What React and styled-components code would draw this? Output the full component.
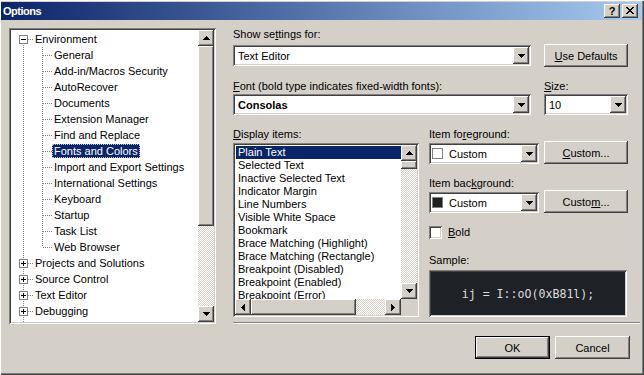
import React from 'react';
import styled, { createGlobalStyle, css } from 'styled-components';

const FACE = '#d4d0c8';
const SHADOW = '#808080';
const DARK = '#404040';
const NAVY = '#0a246a';
const DOT = '#808080';

const GlobalStyle = createGlobalStyle`
  html, body { margin: 0; padding: 0; background: ${FACE}; }
  body {
    width: 644px; height: 375px; overflow: hidden;
    font-family: "Liberation Sans", Arial, sans-serif;
    font-size: 11px; color: #000;
  }
  * { box-sizing: border-box; }
  u { text-underline-offset: 1px; }
`;

const raised = css`
  background-color: ${FACE};
  box-shadow: inset -1px -1px ${DARK}, inset 1px 1px #fff,
    inset -2px -2px ${SHADOW}, inset 2px 2px ${FACE};
`;

const sunken = css`
  box-shadow: inset 1px 1px ${SHADOW}, inset -1px -1px #fff,
    inset 2px 2px ${DARK}, inset -2px -2px ${FACE};
`;

const checker = css`
  background: repeating-conic-gradient(${FACE} 0 25%, #fff 0 50%) 0 0 / 2px 2px;
`;

/* ---------- window ---------- */

const Window = styled.div`
  width: 644px;
  height: 375px;
  display: flex;
  flex-direction: column;
  padding: 2px 2px 2px 1px;
  background: ${FACE};
  box-shadow: inset 1px 1px #fff, inset -1px -1px ${DARK}, inset -2px -2px ${SHADOW};
`;

const TitleBar = styled.div`
  height: 18px;
  display: flex;
  align-items: center;
  padding: 0 4px 0 2px;
  background: linear-gradient(to right, ${NAVY}, #a6caf0);
`;

const Title = styled.span`
  flex: 1;
  color: #fff;
  font-weight: bold;
  font-size: 11px;
  letter-spacing: -0.5px;
`;

const CaptionButtons = styled.div`
  display: flex;
  gap: 2px;
`;

const CaptionButton = styled.div`
  ${raised};
  width: 16px;
  height: 14px;
  display: flex;
  align-items: center;
  justify-content: center;
  font-weight: bold;
  font-size: 11px;
  line-height: 14px;
  padding-bottom: 1px;
`;

const Main = styled.div`
  display: flex;
  align-items: flex-start;
  margin-top: 8px;
  padding-left: 8px;
`;

/* ---------- tree ---------- */

const Tree = styled.div`
  ${sunken};
  background: #fff;
  width: 207px;
  height: 296px;
  padding: 2px;
  display: flex;
`;

const TreeList = styled.div`
  flex: 1;
  overflow: hidden;
  padding-top: 1px;
`;

const TreeRow = styled.div`
  height: 16px;
  display: flex;
  white-space: nowrap;
`;

const V = `repeating-linear-gradient(to bottom, ${DOT} 0 1px, transparent 1px 2px)`;
const H = `repeating-linear-gradient(to right, ${DOT} 0 1px, transparent 1px 2px)`;

function connectorLayers({ $up, $down, $branch, $w }) {
  const x = 12;
  const layers = [];
  if ($up) layers.push([V, `${x}px 0`, '1px 8px']);
  if ($down) layers.push([V, `${x}px 8px`, '1px 8px']);
  if ($branch) layers.push([H, `${x + 1}px 8px`, `${$w - x - 1}px 1px`]);
  if (!layers.length) return 'background: none;';
  return `
    background-image: ${layers.map((l) => l[0]).join(', ')};
    background-position: ${layers.map((l) => l[1]).join(', ')};
    background-size: ${layers.map((l) => l[2]).join(', ')};
    background-repeat: no-repeat;
  `;
}

const Connector = styled.span`
  flex: none;
  width: ${(p) => p.$w}px;
  height: 16px;
  display: flex;
  align-items: flex-start;
  ${(p) => connectorLayers(p)};
`;

const Expander = styled.span`
  width: 9px;
  height: 9px;
  margin: 4px 0 0 8px;
  border: 1px solid ${SHADOW};
  background-color: #fff;
  background-image: linear-gradient(#000, #000)
    ${(p) => (p.$open ? '' : ', linear-gradient(#000, #000)')};
  background-position: center;
  background-size: 5px 1px ${(p) => (p.$open ? '' : ', 1px 5px')};
  background-repeat: no-repeat;
`;

const TreeLabel = styled.span`
  align-self: center;
  height: 14px;
  line-height: 14px;
  padding: 0 2px;
  ${(p) =>
    p.$selected &&
    css`
      background: ${NAVY};
      color: #fff;
      outline: 1px dotted #c8c8c8;
      outline-offset: -1px;
    `}
`;

const ScrollV = styled.div`
  width: 16px;
  flex: none;
  display: flex;
  flex-direction: column;
`;

const ScrollH = styled.div`
  height: 16px;
  display: flex;
`;

const ArrowButton = styled.div`
  ${raised};
  width: 16px;
  height: 16px;
  flex: none;
  display: flex;
  align-items: center;
  justify-content: center;
`;

const Thumb = styled.div`
  ${raised};
  flex: none;
  ${(p) => (p.$vertical ? `height: ${p.$size}px; width: 16px;` : `width: ${p.$size}px; height: 16px;`)}
`;

const Track = styled.div`
  flex: 1;
  ${checker};
`;

const Corner = styled.div`
  background: ${FACE};
`;

const arrowPaths = {
  up: 'M3 0h1v1h1v1h1v1h1v1H0V3h1V2h1V1h1z',
  down: 'M0 0h7v1H6v1H5v1H4v1H3V3H2V2H1V1H0z',
  left: 'M3 0h1v7H3V6H2V5H1V4H0V3h1V2h1V1h1z',
  right: 'M0 0h1v1h1v1h1v1h1v1H3v1H2v1H1v1H0z',
};

function Arrow({ dir }) {
  const horiz = dir === 'left' || dir === 'right';
  return (
    <svg width={horiz ? 4 : 7} height={horiz ? 7 : 4} viewBox={horiz ? '0 0 4 7' : '0 0 7 4'} shapeRendering="crispEdges">
      <path d={arrowPaths[dir]} fill="#000" />
    </svg>
  );
}

/* ---------- right pane ---------- */

const Pane = styled.div`
  margin-left: 17px;
  width: 407px;
  padding: 0 12px 5px 0;
  border-bottom: 1px solid ${SHADOW};
  box-shadow: 0 1px #fff;
  display: flex;
  flex-direction: column;
`;

const Label = styled.div`
  height: 13px;
  line-height: 13px;
  white-space: nowrap;
`;

const Row = styled.div`
  display: flex;
  align-items: flex-end;
  gap: ${(p) => p.$gap ?? 13}px;
  margin-top: ${(p) => p.$top ?? 0}px;
`;

const Field = styled.div`
  display: flex;
  flex-direction: column;
  width: ${(p) => p.$w}px;
  flex: none;
`;

const Combo = styled.div`
  ${sunken};
  background-color: #fff;
  width: ${(p) => p.$w}px;
  height: 21px;
  padding: 2px;
  margin-top: ${(p) => p.$top ?? 0}px;
  display: flex;
  align-items: center;
`;

const ComboValue = styled.div`
  flex: 1;
  display: flex;
  align-items: center;
  gap: 6px;
  padding-left: ${(p) => (p.$swatch ? 1 : 3)}px;
  font-weight: ${(p) => (p.$bold ? 'bold' : 'normal')};
  white-space: nowrap;
`;

const Swatch = styled.span`
  width: 11px;
  height: 11px;
  border: 1px solid ${SHADOW};
  background: ${(p) => p.$color};
`;

const DropButton = styled(ArrowButton)`
  height: 17px;
`;

const Button = styled.div`
  ${raised};
  width: ${(p) => p.$w}px;
  height: 23px;
  flex: none;
  display: flex;
  align-items: center;
  justify-content: center;
  margin-bottom: ${(p) => p.$mb ?? 0}px;
  ${(p) =>
    p.$default &&
    css`
      box-shadow: inset 0 0 0 1px #000, inset -2px -2px ${DARK}, inset 2px 2px #fff,
        inset -3px -3px ${SHADOW}, inset 3px 3px ${FACE};
    `}
`;

const Columns = styled.div`
  display: flex;
  margin-top: 13px;
`;

const LeftColumn = styled.div`
  width: 186px;
  flex: none;
  display: flex;
  flex-direction: column;
`;

const RightColumn = styled.div`
  width: 199px;
  margin-left: 10px;
  display: flex;
  flex-direction: column;
`;

const ListBox = styled.div`
  ${sunken};
  background-color: #fff;
  margin-top: 2px;
  height: 174px;
  padding: 2px;
  display: grid;
  grid-template-columns: 1fr 16px;
  grid-template-rows: 1fr 16px;
`;

const ListItems = styled.div`
  overflow: hidden;
  padding-top: 1px;
`;

const ListItem = styled.div`
  height: 13px;
  line-height: 13px;
  padding-left: 2px;
  margin-left: 1px;
  white-space: nowrap;
  ${(p) =>
    p.$selected &&
    css`
      background: ${NAVY};
      color: #fff;
    `}
`;

const CheckRow = styled.label`
  display: flex;
  align-items: center;
  gap: 6px;
  margin-top: 13px;
  height: 13px;
  line-height: 13px;
`;

const CheckBox = styled.span`
  ${sunken};
  background-color: #fff;
  width: 13px;
  height: 13px;
`;

const Spaced = styled(Label)`
  margin-top: ${(p) => p.$top}px;
`;

const Sample = styled.div`
  ${sunken};
  background-color: #1e2226;
  margin-top: 3px;
  width: 198px;
  height: 47px;
  display: flex;
  align-items: center;
  justify-content: center;
  font-family: "DejaVu Sans Mono", "Liberation Mono", monospace;
  font-size: 11.6px;
  color: #dcdcdc;
  white-space: pre;
`;

const Footer = styled.div`
  display: flex;
  justify-content: flex-end;
  gap: 5px;
  margin-top: 12px;
  padding-right: 12px;
`;

/* ---------- data ---------- */

const envChildren = [
  'General',
  'Add-in/Macros Security',
  'AutoRecover',
  'Documents',
  'Extension Manager',
  'Find and Replace',
  'Fonts and Colors',
  'Import and Export Settings',
  'International Settings',
  'Keyboard',
  'Startup',
  'Task List',
  'Web Browser',
];

const roots = ['Projects and Solutions', 'Source Control', 'Text Editor', 'Debugging', 'Database Tools'];

const displayItems = [
  'Plain Text',
  'Selected Text',
  'Inactive Selected Text',
  'Indicator Margin',
  'Line Numbers',
  'Visible White Space',
  'Bookmark',
  'Brace Matching (Highlight)',
  'Brace Matching (Rectangle)',
  'Breakpoint (Disabled)',
  'Breakpoint (Enabled)',
  'Breakpoint (Error)',
];

function CloseGlyph() {
  return (
    <svg width="8" height="7" viewBox="0 0 8 7" shapeRendering="crispEdges">
      <path
        d="M0 0h2v1h1v1h2V1h1V0h2v1H7v1H6v1H5v1h1v1h1v1h1v1H6V6H5V5H3v1H2v1H0V6h1V5h1V4h1V3H2V2H1V1H0z"
        fill="#000"
      />
    </svg>
  );
}

function ComboBox({ w, top, bold, swatch, children }) {
  return (
    <Combo $w={w} $top={top}>
      <ComboValue $bold={bold} $swatch={!!swatch}>
        {swatch && <Swatch $color={swatch} />}
        <span>{children}</span>
      </ComboValue>
      <DropButton>
        <Arrow dir="down" />
      </DropButton>
    </Combo>
  );
}

export default function App() {
  return (
    <>
      <GlobalStyle />
      <Window>
        <TitleBar>
          <Title>Options</Title>
          <CaptionButtons>
            <CaptionButton>?</CaptionButton>
            <CaptionButton>
              <CloseGlyph />
            </CaptionButton>
          </CaptionButtons>
        </TitleBar>

        <Main>
          <Tree>
            <TreeList>
              <TreeRow>
                <Connector $w={22} $down $branch>
                  <Expander $open />
                </Connector>
                <TreeLabel>Environment</TreeLabel>
              </TreeRow>
              {envChildren.map((c, i) => (
                <TreeRow key={c}>
                  <Connector $w={19} $up $down />
                  <Connector $w={22} $up $down={i < envChildren.length - 1} $branch />
                  <TreeLabel $selected={c === 'Fonts and Colors'}>{c}</TreeLabel>
                </TreeRow>
              ))}
              {roots.map((r) => (
                <TreeRow key={r}>
                  <Connector $w={22} $up $down $branch>
                    <Expander />
                  </Connector>
                  <TreeLabel>{r}</TreeLabel>
                </TreeRow>
              ))}
            </TreeList>
            <ScrollV>
              <ArrowButton>
                <Arrow dir="up" />
              </ArrowButton>
              <Thumb $vertical $size={180} />
              <Track />
              <ArrowButton>
                <Arrow dir="down" />
              </ArrowButton>
            </ScrollV>
          </Tree>

          <Pane>
            <Row>
              <Field $w={298}>
                <Label>
                  Show se<u>t</u>tings for:
                </Label>
                <ComboBox w={298} top={4}>
                  Text Editor
                </ComboBox>
              </Field>
              <Button $w={84} $mb={-1}>
                <span>
                  <u>U</u>se Defaults
                </span>
              </Button>
            </Row>

            <Row $top={14}>
              <Field $w={298}>
                <Label>
                  <u>F</u>ont (bold type indicates fixed-width fonts):
                </Label>
                <ComboBox w={298} top={1} bold>
                  Consolas
                </ComboBox>
              </Field>
              <Field $w={84}>
                <Label>
                  <u>S</u>ize:
                </Label>
                <ComboBox w={84} top={1}>
                  10
                </ComboBox>
              </Field>
            </Row>

            <Columns>
              <LeftColumn>
                <Label>
                  <u>D</u>isplay items:
                </Label>
                <ListBox>
                  <ListItems>
                    {displayItems.map((d, i) => (
                      <ListItem key={d} $selected={i === 0}>
                        {d}
                      </ListItem>
                    ))}
                  </ListItems>
                  <ScrollV>
                    <ArrowButton>
                      <Arrow dir="up" />
                    </ArrowButton>
                    <Thumb $vertical $size={8} />
                    <Track />
                    <ArrowButton>
                      <Arrow dir="down" />
                    </ArrowButton>
                  </ScrollV>
                  <ScrollH>
                    <ArrowButton>
                      <Arrow dir="left" />
                    </ArrowButton>
                    <Thumb $size={105} />
                    <Track />
                    <ArrowButton>
                      <Arrow dir="right" />
                    </ArrowButton>
                  </ScrollH>
                  <Corner />
                </ListBox>
              </LeftColumn>

              <RightColumn>
                <Label>
                  Item fo<u>r</u>eground:
                </Label>
                <Row $gap={5}>
                  <ComboBox w={110} swatch="#fff">
                    Custom
                  </ComboBox>
                  <Button $w={84}>
                    <span>
                      <u>C</u>ustom...
                    </span>
                  </Button>
                </Row>
                <Spaced $top={13}>
                  Item bac<u>k</u>ground:
                </Spaced>
                <Row $gap={5}>
                  <ComboBox w={110} swatch="#1e2226">
                    Custom
                  </ComboBox>
                  <Button $w={84}>
                    <span>
                      Custo<u>m</u>...
                    </span>
                  </Button>
                </Row>
                <CheckRow>
                  <CheckBox />
                  <span>
                    <u>B</u>old
                  </span>
                </CheckRow>
                <Spaced $top={15}>Sample:</Spaced>
                <Sample>ij = I::oO(0xB81l);</Sample>
              </RightColumn>
            </Columns>
          </Pane>
        </Main>

        <Footer>
          <Button $w={75} $default>
            OK
          </Button>
          <Button $w={75}>Cancel</Button>
        </Footer>
      </Window>
    </>
  );
}
